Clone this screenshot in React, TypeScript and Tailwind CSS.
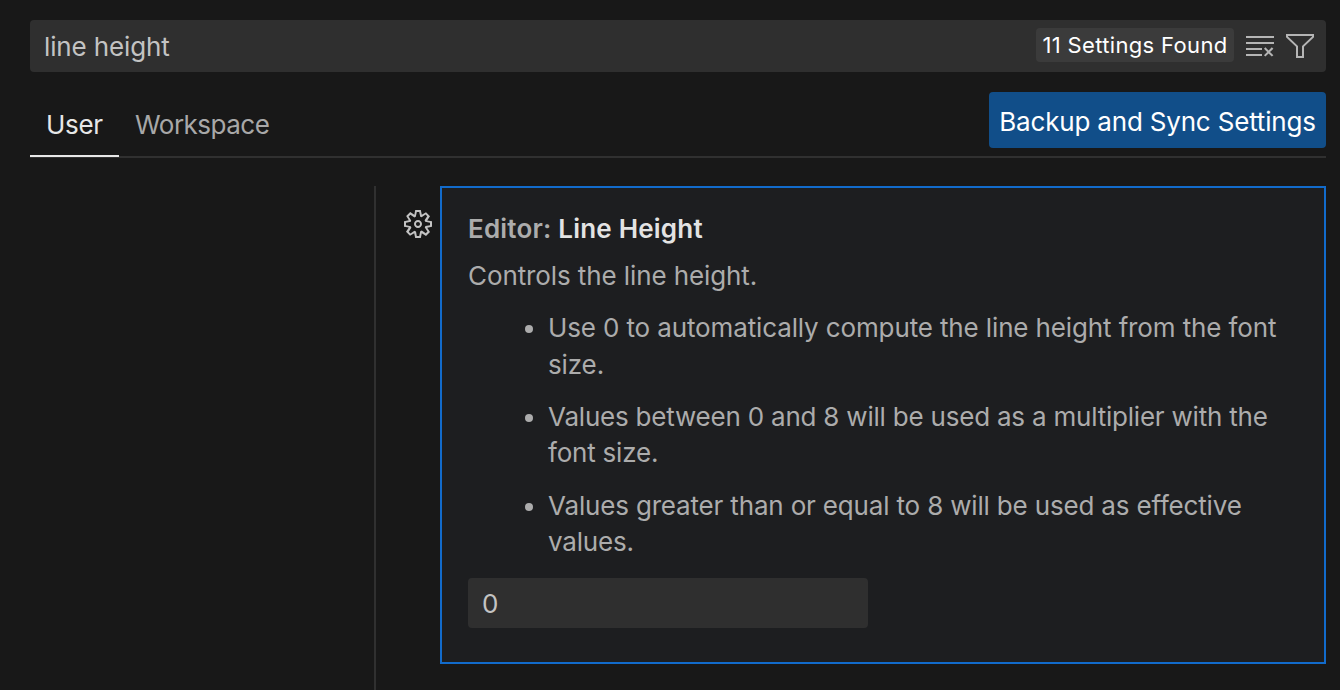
import { VscClearAll, VscFilter, VscGear } from 'react-icons/vsc';

const rules = [
  {
    lines: ['Use 0 to automatically compute the line height from the font', 'size.'],
    tracking: 'tracking-[-0.13px]',
  },
  {
    lines: ['Values between 0 and 8 will be used as a multiplier with the', 'font size.'],
    tracking: 'tracking-[-0.21px]',
  },
  {
    lines: ['Values greater than or equal to 8 will be used as effective', 'values.'],
    tracking: 'tracking-[-0.17px]',
  },
];

function SearchBar() {
  return (
    <div className="flex h-[52px] items-center rounded-[4px] bg-[#2f2f2f] pl-[14px] pr-[10px]">
      <span className="flex-1 pt-[2px] text-[26px] leading-[36px] tracking-[-0.13px] text-[#c3c3c3]">line height</span>
      <span className="mb-[2px] flex h-[34px] w-[198px] items-center justify-center whitespace-nowrap rounded-[4px] bg-[#3b3b3b] text-[22px] tracking-[0.35px] text-white">
        11 Settings Found
      </span>
      <VscClearAll className="ml-[10px] size-8 text-[#b5b5b5]" />
      <VscFilter className="ml-2 size-8 text-[#b5b5b5]" />
    </div>
  );
}

function Tabs() {
  return (
    <div className="flex h-[86px] items-end justify-between border-b-2 border-[#303030]">
      <div className="flex text-[26px] leading-[38px]">
        <div className="-mb-px h-[51px] w-[89px] border-b-2 border-[#e7e7e7] pl-4 tracking-[-0.3px] text-[#e7e7e7]">User</div>
        <div className="h-[50px] pl-4 tracking-[-0.5px] text-[#a8a8a8]">Workspace</div>
      </div>
      <button className="mb-2 flex h-14 w-[337px] items-center justify-center whitespace-nowrap rounded-[4px] bg-[#114e89] pt-[2px] text-[26px] tracking-[-0.18px] text-white">
        Backup and Sync Settings
      </button>
    </div>
  );
}

function SettingCard() {
  return (
    <section className="h-[478px] w-[886px] border-2 border-[#126bcb] bg-[#1d1e20] pl-[26px] pt-[23px] text-[26px] leading-[36px] text-[#acacac]">
      <h2 className="h-[47px] whitespace-nowrap font-semibold tracking-[0.2px]">
        Editor: <span className="text-[#e3e3e3]">Line Height</span>
      </h2>
      <p className="h-[52.2px] tracking-[-0.1px]">Controls the line height.</p>
      <ul className="flex list-none flex-col pl-[80px]">
        {rules.map(({ lines, tracking }) => (
          <li key={lines[0]} className={`relative h-[88.8px] leading-[36.4px] ${tracking}`}>
            <span className="absolute -left-[23px] top-[15px] size-2 rounded-full bg-[#acacac]" />
            {lines.map((line) => (
              <span key={line} className="block whitespace-nowrap">{line}</span>
            ))}
          </li>
        ))}
      </ul>
      <div className="mt-[1.4px] flex h-[50px] w-[400px] items-center rounded-[4px] bg-[#2f2f2f] pl-[14px] pt-[2px] text-[#c3c3c3]">0</div>
    </section>
  );
}

export default function App() {
  return (
    <div className="h-[690px] w-[1340px] overflow-hidden bg-[#181818] pl-[30px] pr-[14px] pt-5 font-['Inter',sans-serif]">
      <SearchBar />
      <Tabs />
      <div className="flex pt-7">
        <div className="h-[504px] w-[346px] border-r-2 border-[#303030]" />
        <div className="w-[64px] pl-[26px] pt-[22px]">
          <VscGear className="size-8 text-[#c3c3c3]" />
        </div>
        <SettingCard />
      </div>
    </div>
  );
}
